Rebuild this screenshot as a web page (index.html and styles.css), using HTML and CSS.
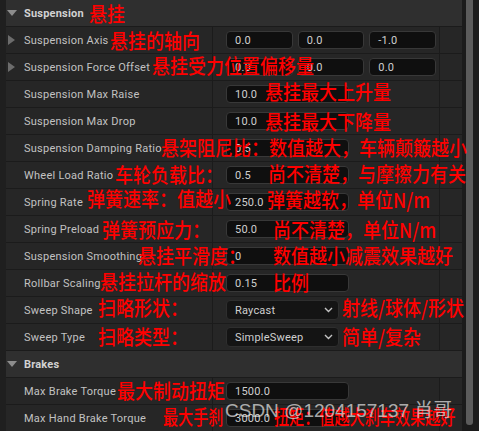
FILE: index.html
```html
<!DOCTYPE html>
<html lang="en">
<head>
  <meta charset="UTF-8" />
  <title>Vehicle Details</title>
  <link rel="stylesheet" href="styles.css">
</head>
<body>

  <div class="details">

    <!-- === Property panel === -->
    <div class="panel">

      <div class="category"><span class="caret down"></span>Suspension</div>

      <div class="prop">
        <div class="name"><span class="caret right"></span>Suspension Axis</div>
        <div class="value triple">
          <span class="field">0.0</span><span class="field">0.0</span><span class="field">-1.0</span>
        </div>
        <div class="extra"></div>
      </div>

      <div class="prop">
        <div class="name"><span class="caret right"></span>Suspension Force Offset</div>
        <div class="value triple">
          <span class="field">0.0</span><span class="field">0.0</span><span class="field">0.0</span>
        </div>
        <div class="extra"></div>
      </div>

      <div class="prop">
        <div class="name">Suspension Max Raise</div>
        <div class="value"><span class="field single">10.0</span></div>
        <div class="extra"></div>
      </div>

      <div class="prop">
        <div class="name">Suspension Max Drop</div>
        <div class="value"><span class="field single">10.0</span></div>
        <div class="extra"></div>
      </div>

      <div class="prop">
        <div class="name">Suspension Damping Ratio</div>
        <div class="value"><span class="field single">0.5</span></div>
        <div class="extra"></div>
      </div>

      <div class="prop">
        <div class="name">Wheel Load Ratio</div>
        <div class="value"><span class="field single">0.5</span></div>
        <div class="extra"></div>
      </div>

      <div class="prop">
        <div class="name">Spring Rate</div>
        <div class="value"><span class="field single">250.0</span></div>
        <div class="extra"></div>
      </div>

      <div class="prop">
        <div class="name">Spring Preload</div>
        <div class="value"><span class="field single">50.0</span></div>
        <div class="extra"></div>
      </div>

      <div class="prop">
        <div class="name">Suspension Smoothing</div>
        <div class="value"><span class="field single">0</span></div>
        <div class="extra"></div>
      </div>

      <div class="prop">
        <div class="name">Rollbar Scaling</div>
        <div class="value"><span class="field single">0.15</span></div>
        <div class="extra"></div>
      </div>

      <div class="prop">
        <div class="name">Sweep Shape</div>
        <div class="value">
          <span class="combo">Raycast
            <svg class="chevron" width="9" height="6" viewBox="0 0 9 6"><polyline points="1,1 4.5,4.5 8,1" /></svg>
          </span>
        </div>
        <div class="extra"></div>
      </div>

      <div class="prop">
        <div class="name">Sweep Type</div>
        <div class="value">
          <span class="combo">SimpleSweep
            <svg class="chevron" width="9" height="6" viewBox="0 0 9 6"><polyline points="1,1 4.5,4.5 8,1" /></svg>
          </span>
        </div>
        <div class="extra"></div>
      </div>

      <div class="category"><span class="caret down"></span>Brakes</div>

      <div class="prop">
        <div class="name">Max Brake Torque</div>
        <div class="value"><span class="field single">1500.0</span></div>
        <div class="extra"></div>
      </div>

      <div class="prop">
        <div class="name">Max Hand Brake Torque</div>
        <div class="value"><span class="field single">3000.0</span></div>
        <div class="extra"></div>
      </div>

    </div>

    <div class="scrollbar"><div class="thumb"></div></div>

    <!-- === Notes written over the panel === -->
    <div class="notes">
      <span class="note n-susp">悬挂</span>
      <span class="note n-axis">悬挂的轴向</span>
      <span class="note n-offset">悬挂受力位置偏移量</span>
      <span class="note n-raise">悬挂最大上升量</span>
      <span class="note n-drop">悬挂最大下降量</span>
      <span class="note n-damp">悬架阻尼比：数值越大，车辆颠簸越小</span>
      <span class="note n-load">车轮负载比：</span>
      <span class="note n-load2">尚不清楚，与摩擦力有关</span>
      <span class="note n-rate">弹簧速率：值越小</span>
      <span class="note n-rate2">弹簧越软，单位N/m</span>
      <span class="note n-pre">弹簧预应力：</span>
      <span class="note n-pre2">尚不清楚，单位N/m</span>
      <span class="note n-smooth">悬挂平滑度：</span>
      <span class="note n-smooth2">数值越小减震效果越好</span>
      <span class="note n-roll">悬挂拉杆的缩放</span>
      <span class="note n-roll2">比例</span>
      <span class="note n-shape">扫略形状：</span>
      <span class="note n-shape2">射线/球体/形状</span>
      <span class="note n-type">扫略类型：</span>
      <span class="note n-type2">简单/复杂</span>
      <span class="note n-brake">最大制动扭矩</span>
      <span class="note narrow n-hand">最大手刹</span>
      <span class="note narrow n-hand2">扭矩：值越大刹车效果越好</span>
      <span class="watermark">CSDN @1204157137 肖哥</span>
    </div>

  </div>

</body>
</html>
```

FILE: styles.css
```css
body {
  margin: 0;
  background: #1e1e1e;
  font-family: Roboto, "Noto Sans", sans-serif;
  font-size: 11px;
  overflow: hidden;
}

.details {
  position: relative;
  display: flex;
  width: 479px;
  height: 431px;
}

/* === Panel rows === */
.panel {
  width: 456px;
  border-left: 6px solid #1f1f1f;
  background: #262626;
}

.category {
  display: flex;
  align-items: center;
  height: 26px;
  border-bottom: 1px solid #1b1b1b;
  background: #2f2f2f;
  color: #d2d2d2;
  font-weight: bold;
  letter-spacing: 0.2px;
}

.prop {
  display: grid;
  grid-template-columns: 207px 227px 22px;
  height: 26px;
  border-bottom: 1px solid #1b1b1b;
}

.name {
  display: flex;
  align-items: center;
  padding-left: 18px;
  border-right: 1px solid #1b1b1b;
  color: #c2c2c2;
  letter-spacing: 0.25px;
  white-space: nowrap;
}

.category,
.name {
  position: relative;
}

.category {
  padding-left: 18px;
}

.caret {
  position: absolute;
  width: 0;
  height: 0;
}

.caret.down {
  left: 1px;
  top: 10px;
  border-left: 5px solid transparent;
  border-right: 5px solid transparent;
  border-top: 6px solid #8c8c8c;
}

.caret.right {
  left: 2px;
  top: 8px;
  border-top: 5px solid transparent;
  border-bottom: 5px solid transparent;
  border-left: 7px solid #6c6c6c;
}

.value {
  display: flex;
  align-items: center;
  padding: 0 3px 0 13px;
  border-right: 1px solid #1b1b1b;
}

.triple {
  gap: 5px;
}

.field {
  box-sizing: border-box;
  display: flex;
  align-items: center;
  height: 18px;
  padding-left: 8px;
  border: 1px solid #383838;
  border-radius: 4px;
  background: #0f0f0f;
  color: #cfcfcf;
  letter-spacing: 0.2px;
}

.triple .field {
  flex: 1;
}

.single {
  width: 123px;
}

.combo {
  box-sizing: border-box;
  display: flex;
  align-items: center;
  justify-content: space-between;
  width: 113px;
  height: 20px;
  padding: 0 5px 0 8px;
  border: 1px solid #2e2e2e;
  border-radius: 4px;
  background: #141414;
  color: #cfcfcf;
  letter-spacing: 0.2px;
}

.chevron polyline {
  fill: none;
  stroke: #c4c4c4;
  stroke-width: 1.4;
}

/* === Scrollbar === */
.scrollbar {
  width: 17px;
  background: #1b1b1b;
  padding-left: 4px;
  box-sizing: border-box;
}

.thumb {
  width: 7px;
  height: 425px;
  border-radius: 0 0 3px 3px;
  background: #5b5b5b;
}

/* === Notes === */
.notes {
  position: absolute;
  inset: 0;
  pointer-events: none;
}

.note {
  position: absolute;
  color: #ff0000;
  font-family: "Noto Sans CJK SC", sans-serif;
  font-size: 18px;
  font-weight: 500;
  line-height: 20px;
  white-space: nowrap;
  transform: scaleY(1.14);
  transform-origin: left center;
}

.narrow {
  transform: scale(0.84, 1.14);
}

.n-susp { left: 89px; top: 3px; }
.n-axis { left: 110px; top: 30px; }
.n-offset { left: 152px; top: 55px; }
.n-raise { left: 265px; top: 81px; }
.n-drop { left: 265px; top: 111px; }
.n-damp { left: 161px; top: 137px; }
.n-load { left: 115px; top: 164px; }
.n-load2 { left: 268px; top: 163px; }
.n-rate { left: 87px; top: 188px; }
.n-rate2 { left: 267px; top: 189px; }
.n-pre { left: 102px; top: 219px; }
.n-pre2 { left: 273px; top: 219px; }
.n-smooth { left: 138px; top: 245px; }
.n-smooth2 { left: 273px; top: 245px; }
.n-roll { left: 100px; top: 271px; }
.n-roll2 { left: 273px; top: 272px; }
.n-shape { left: 98px; top: 297px; }
.n-shape2 { left: 342px; top: 297px; }
.n-type { left: 98px; top: 326px; }
.n-type2 { left: 342px; top: 326px; }
.n-brake { left: 117px; top: 380px; }
.n-hand { left: 163px; top: 406px; }
.n-hand2 { left: 274px; top: 406px; }

.watermark {
  position: absolute;
  left: 225px;
  top: 399px;
  color: rgba(235, 235, 235, 0.7);
  font-family: "Liberation Sans", "Noto Sans CJK SC", sans-serif;
  font-size: 19px;
  line-height: 24px;
  white-space: nowrap;
}
```
